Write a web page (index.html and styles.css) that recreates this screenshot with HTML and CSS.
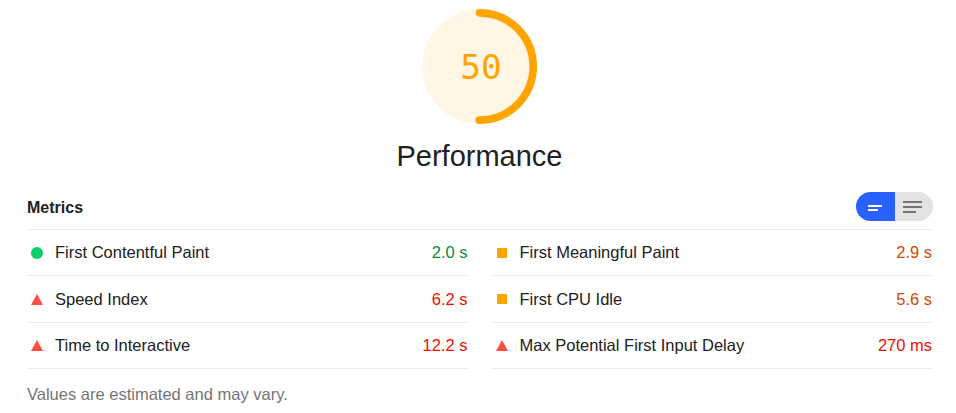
FILE: index.html
```html
<!DOCTYPE html>
<html lang="en">
<head>
<meta charset="utf-8">
<title>Performance</title>
<link rel="stylesheet" href="styles.css">
</head>
<body>
<div class="report">
  <div class="gauge-wrap">
    <div class="gauge">
      <svg class="gauge-svg" viewBox="0 0 120 120" width="115" height="115">
        <circle class="gauge-base" cx="60" cy="60" r="60"></circle>
        <circle class="gauge-arc" cx="60" cy="60" r="56" transform="rotate(-90 60 60)"></circle>
      </svg>
      <span class="gauge-value">50</span>
    </div>
    <div class="gauge-label">Performance</div>
  </div>

  <div class="metrics-header">
    <span class="metrics-title">Metrics</span>
    <div class="toggle">
      <span class="toggle-btn toggle-btn--on">
        <svg width="38" height="29" viewBox="0 0 38 29"><rect x="12" y="13" width="14" height="2" fill="#fff"/><rect x="12" y="17" width="10" height="2" fill="#fff"/></svg>
      </span>
      <span class="toggle-btn toggle-btn--off">
        <svg width="38" height="29" viewBox="0 0 38 29"><rect x="8" y="9" width="19" height="2" fill="#757575"/><rect x="8" y="14" width="19" height="2" fill="#757575"/><rect x="8" y="19" width="13" height="2" fill="#757575"/></svg>
      </span>
    </div>
  </div>

  <div class="metrics">
    <div class="metric"><span class="icon icon--pass"></span><span class="metric-title">First Contentful Paint</span><span class="metric-value value--pass">2.0 s</span></div>
    <div class="metric"><span class="icon icon--average"></span><span class="metric-title">First Meaningful Paint</span><span class="metric-value value--average">2.9 s</span></div>
    <div class="metric"><span class="icon icon--fail"></span><span class="metric-title">Speed Index</span><span class="metric-value value--fail">6.2 s</span></div>
    <div class="metric"><span class="icon icon--average"></span><span class="metric-title">First CPU Idle</span><span class="metric-value value--average">5.6 s</span></div>
    <div class="metric"><span class="icon icon--fail"></span><span class="metric-title">Time to Interactive</span><span class="metric-value value--fail">12.2 s</span></div>
    <div class="metric"><span class="icon icon--fail"></span><span class="metric-title">Max Potential First Input Delay</span><span class="metric-value value--fail">270 ms</span></div>
  </div>

  <div class="footnote">Values are estimated and may vary.</div>
</div>
</body>
</html>
```

FILE: styles.css
```css
html, body {
  margin: 0;
  padding: 0;
  background: #ffffff;
}

body {
  font-family: "Liberation Sans", Arial, sans-serif;
  color: #212121;
}

.report {
  padding: 9px 24px 0 27px;
}

.gauge-wrap {
  display: flex;
  flex-direction: column;
  align-items: center;
}

.gauge {
  display: grid;
  width: 115px;
  height: 115px;
}

.gauge > * {
  grid-area: 1 / 1;
}

.gauge-svg {
  display: block;
}

.gauge-base {
  fill: #ffa400;
  opacity: 0.1;
}

.gauge-arc {
  fill: none;
  stroke: #ffa400;
  stroke-width: 8;
  stroke-linecap: round;
  stroke-dasharray: 175.9 351.9;
}

.gauge-value {
  display: flex;
  align-items: center;
  justify-content: center;
  font-family: "DejaVu Sans Mono", "Liberation Mono", monospace;
  font-size: 34.5px;
  color: #ffa400;
  padding-left: 3px;
}

.gauge-label {
  margin-top: 14px;
  font-size: 29px;
  line-height: 36px;
  color: #212121;
}

.metrics-header {
  margin-top: 18px;
  display: flex;
  align-items: center;
  justify-content: space-between;
  padding-bottom: 8px;
  border-bottom: 1px solid #ebebeb;
}

.metrics-title {
  font-weight: bold;
  font-size: 16px;
  color: #212121;
  padding-top: 3px;
}

.toggle {
  display: flex;
  margin-right: -1px;
}

.toggle-btn {
  display: block;
  width: 38.5px;
  height: 29px;
}

.toggle-btn svg {
  display: block;
}

.toggle-btn--on {
  background: #2962ff;
  border-radius: 15px 0 0 15px;
}

.toggle-btn--off {
  background: #e3e3e3;
  border-radius: 0 15px 15px 0;
}

.metrics {
  display: grid;
  grid-template-columns: 1fr 1fr;
  column-gap: 24px;
}

.metric {
  display: flex;
  align-items: center;
  box-sizing: border-box;
  height: 46.4px;
  padding-left: 4px;
  border-bottom: 1px solid #ebebeb;
  font-size: 16.5px;
}

.icon {
  flex: none;
  margin-right: 12px;
}

.icon--pass {
  width: 12px;
  height: 12px;
  border-radius: 50%;
  background: #0cce6b;
}

.icon--average {
  width: 10px;
  height: 10px;
  margin-left: 1px;
  margin-right: 13px;
  background: #ffa400;
}

.icon--fail {
  width: 0;
  height: 0;
  border-left: 6px solid transparent;
  border-right: 6px solid transparent;
  border-bottom: 11px solid #ff4e42;
}

.metric-title {
  flex: 1;
  color: #212121;
}

.metric-value {
  flex: none;
}

.value--pass { color: #0b8a46; }
.value--average { color: #d04900; }
.value--fail { color: #eb0f00; }

.footnote {
  padding-top: 13px;
  font-size: 16.5px;
  line-height: 24px;
  color: #757575;
}
```
